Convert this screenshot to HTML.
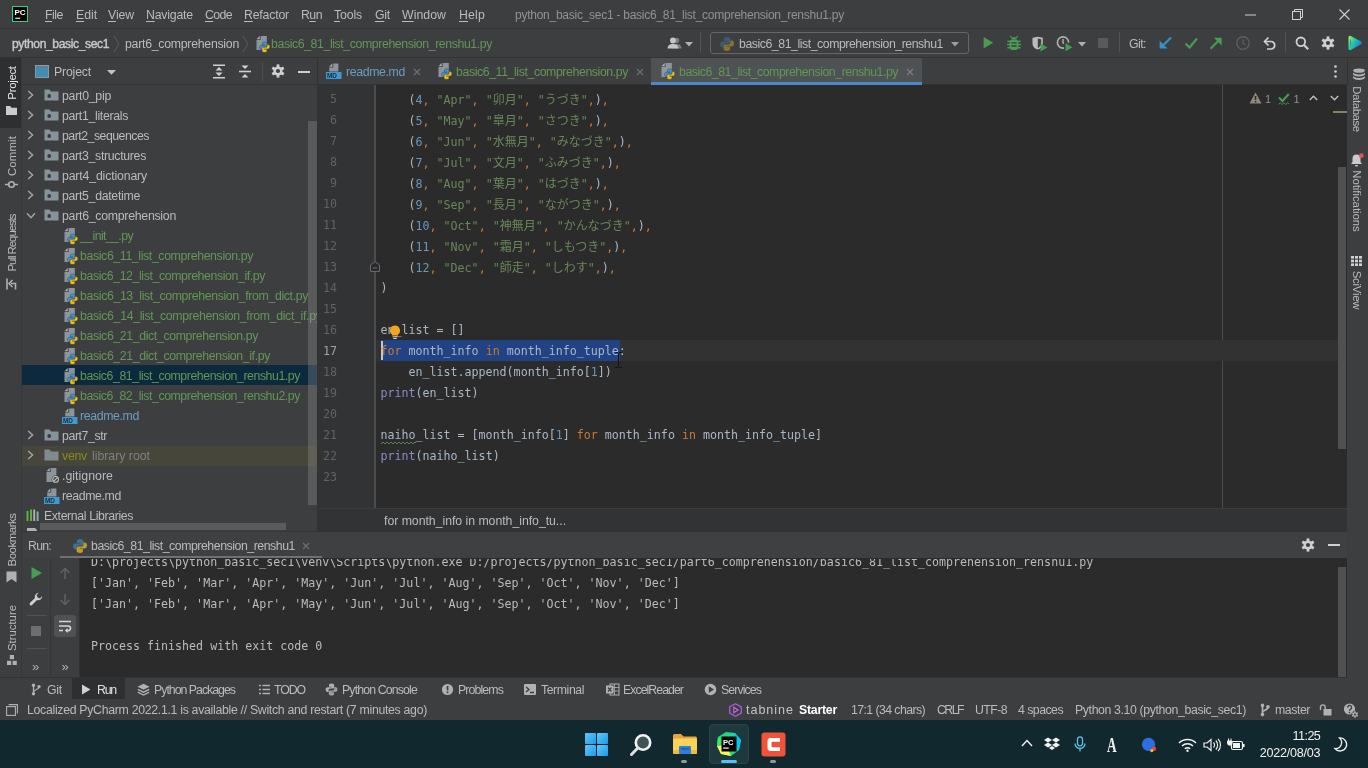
<!DOCTYPE html>
<html lang="ja"><head><meta charset="utf-8"><title>python_basic_sec1 - basic6_81_list_comprehension_renshu1.py</title>
<style>
html,body{margin:0;padding:0;background:#3c3e40;width:1368px;height:768px;overflow:hidden;}
#root{position:relative;width:1368px;height:768px;overflow:hidden;background:#3c3e40;filter:blur(0.45px);font-family:"Liberation Sans","Noto Sans CJK JP",sans-serif;font-size:12px;color:#bbb;}
#root div,#root span,#root svg{position:absolute;}
#root span.t{white-space:pre;display:block;}
#root span.t span{position:static;}
#root svg{overflow:visible;}
#root .u{font-family:"Liberation Sans","Noto Sans CJK JP",sans-serif;}
#root .m{font-family:"DejaVu Sans Mono","Liberation Mono","Noto Sans CJK JP",monospace;}
#root .j{font-family:"Noto Sans CJK JP","IPAGothic",sans-serif;font-size:12px;}
</style></head><body><div id="root">
<div style="left:0px;top:0px;width:1368px;height:720px;background:#3c3e40;"></div>
<div style="left:0px;top:28px;width:1368px;height:1px;background:#323537;"></div>
<div style="left:0px;top:57px;width:1368px;height:1px;background:#323232;"></div>
<svg style="left:12px;top:6px;" width="16" height="16" viewBox="0 0 16 16"><rect x="0.5" y="0.5" width="15" height="15" fill="#000" stroke="#21d789" stroke-width="1"/><text x="2.4" y="9.4" font-family="Liberation Sans, sans-serif" font-weight="700" font-size="8" fill="#fff">PC</text><rect x="3.2" y="11.7" width="5" height="1.1" fill="#fff"/></svg>
<span class="t u" style="left:45px;top:7.0px;height:16px;line-height:16px;font-size:12.3px;font-weight:400;color:#bbbbbb;letter-spacing:-0.457px;"><u style="text-decoration-thickness:1px;text-underline-offset:1.5px">F</u>ile</span>
<span class="t u" style="left:76px;top:7.0px;height:16px;line-height:16px;font-size:12.3px;font-weight:400;color:#bbbbbb;letter-spacing:-0.051px;"><u style="text-decoration-thickness:1px;text-underline-offset:1.5px">E</u>dit</span>
<span class="t u" style="left:108px;top:7.0px;height:16px;line-height:16px;font-size:12.3px;font-weight:400;color:#bbbbbb;letter-spacing:-0.109px;"><u style="text-decoration-thickness:1px;text-underline-offset:1.5px">V</u>iew</span>
<span class="t u" style="left:146px;top:7.0px;height:16px;line-height:16px;font-size:12.3px;font-weight:400;color:#bbbbbb;letter-spacing:-0.193px;"><u style="text-decoration-thickness:1px;text-underline-offset:1.5px">N</u>avigate</span>
<span class="t u" style="left:205px;top:7.0px;height:16px;line-height:16px;font-size:12.3px;font-weight:400;color:#bbbbbb;letter-spacing:-0.605px;"><u style="text-decoration-thickness:1px;text-underline-offset:1.5px">C</u>ode</span>
<span class="t u" style="left:244px;top:7.0px;height:16px;line-height:16px;font-size:12.3px;font-weight:400;color:#bbbbbb;letter-spacing:-0.186px;"><u style="text-decoration-thickness:1px;text-underline-offset:1.5px">R</u>efactor</span>
<span class="t u" style="left:301px;top:7.0px;height:16px;line-height:16px;font-size:12.3px;font-weight:400;color:#bbbbbb;letter-spacing:-0.526px;">R<u style="text-decoration-thickness:1px;text-underline-offset:1.5px">u</u>n</span>
<span class="t u" style="left:334px;top:7.0px;height:16px;line-height:16px;font-size:12.3px;font-weight:400;color:#bbbbbb;letter-spacing:-0.144px;"><u style="text-decoration-thickness:1px;text-underline-offset:1.5px">T</u>ools</span>
<span class="t u" style="left:375px;top:7.0px;height:16px;line-height:16px;font-size:12.3px;font-weight:400;color:#bbbbbb;letter-spacing:-0.245px;"><u style="text-decoration-thickness:1px;text-underline-offset:1.5px">G</u>it</span>
<span class="t u" style="left:402px;top:7.0px;height:16px;line-height:16px;font-size:12.3px;font-weight:400;color:#bbbbbb;letter-spacing:0.042px;"><u style="text-decoration-thickness:1px;text-underline-offset:1.5px">W</u>indow</span>
<span class="t u" style="left:459px;top:7.0px;height:16px;line-height:16px;font-size:12.3px;font-weight:400;color:#bbbbbb;letter-spacing:0.172px;"><u style="text-decoration-thickness:1px;text-underline-offset:1.5px">H</u>elp</span>
<span class="t u" style="left:515px;top:7.0px;height:16px;line-height:16px;font-size:12px;font-weight:400;color:#909395;letter-spacing:-0.258px;">python_basic_sec1 - basic6_81_list_comprehension_renshu1.py</span>
<svg style="left:1245px;top:14px;" width="12" height="2" viewBox="0 0 12 2"><rect x="0" y="0.5" width="11" height="1" fill="#d0d0d0"/></svg>
<svg style="left:1292px;top:9px;" width="12" height="12" viewBox="0 0 12 12"><rect x="0.5" y="2.5" width="8" height="8" fill="none" stroke="#d0d0d0" stroke-width="1"/><path d="M2.5 2.5V0.5H10.5V8.5H8.5" fill="none" stroke="#d0d0d0" stroke-width="1"/></svg>
<svg style="left:1339px;top:9px;" width="12" height="12" viewBox="0 0 12 12"><path d="M0.5 0.5L10.5 10.5M10.5 0.5L0.5 10.5" stroke="#d0d0d0" stroke-width="1.1" fill="none"/></svg>
<span class="t u" style="left:12px;top:36.0px;height:16px;line-height:16px;font-size:12.1px;font-weight:400;color:#c8c8c8;letter-spacing:-0.385px;-webkit-text-stroke:0.4px #c8c8c8;">python_basic_sec1</span>
<svg style="left:113px;top:35px;" width="8" height="18" viewBox="0 0 8 18"><path d="M1 1L6 9L1 17" fill="none" stroke="#5a5d5f" stroke-width="1"/></svg>
<span class="t u" style="left:125px;top:36.0px;height:16px;line-height:16px;font-size:12.3px;font-weight:400;color:#bbbbbb;letter-spacing:-0.261px;">part6_comprehension</span>
<svg style="left:242px;top:35px;" width="8" height="18" viewBox="0 0 8 18"><path d="M1 1L6 9L1 17" fill="none" stroke="#5a5d5f" stroke-width="1"/></svg>
<svg style="left:254.5px;top:36px;" width="16" height="16" viewBox="0 0 16 16"><path d="M5.6 0H11.8V14H1.5V4.1H5.6Z" fill="#9ba3ab" opacity="0.85"/><path d="M1.5 3.2L4.7 0V3.2Z" fill="#b4bbc2" opacity="0.9"/><g transform="translate(3.7 5.2) scale(0.74)"><path d="M7.9 1C5.5 1 5 2 5 3.2V5H8.2V5.6H3.4C2 5.6 1 6.8 1 8.6C1 10.4 2 11.4 3.4 11.4H4.6V9.6C4.6 8.3 5.6 7.4 6.9 7.4H9.8C10.8 7.4 11.4 6.7 11.4 5.8V3.2C11.4 1.9 10.3 1 7.9 1Z" fill="#3d96d6" stroke="#3c3e40" stroke-width="0.6"/><path d="M8.1 15C10.5 15 11 14 11 12.8V11H7.8V10.4H12.6C14 10.4 15 9.2 15 7.4C15 5.6 14 4.6 12.6 4.6H11.4V6.4C11.4 7.7 10.4 8.6 9.1 8.6H6.2C5.2 8.6 4.6 9.3 4.6 10.2V12.8C4.6 14.1 5.7 15 8.1 15Z" fill="#f2c014" stroke="#3c3e40" stroke-width="0.5"/></g></svg>
<span class="t u" style="left:271px;top:36.0px;height:16px;line-height:16px;font-size:12.3px;font-weight:400;color:#629755;letter-spacing:-0.398px;">basic6_81_list_comprehension_renshu1.py</span>
<svg style="left:666.8px;top:36px;" width="15" height="14.4" viewBox="0 0 16.5 16"><circle cx="10.5" cy="5" r="3" fill="#7d8082"/><path d="M5 14C5 10.5 7.5 9 10.5 9S16 10.5 16 14Z" fill="#7d8082"/><circle cx="6.5" cy="5" r="3.2" fill="#c4c6c7"/><path d="M0.5 14C0.5 10.5 3.3 9 6.5 9S12.5 10.5 12.5 14Z" fill="#c4c6c7"/></svg>
<svg style="left:684.5px;top:41.6px;" width="8" height="5" viewBox="0 0 8 5"><path d="M0 0H8L4 4.5Z" fill="#afb1b3"/></svg>
<div style="left:700px;top:32px;width:1px;height:20px;background:#515456;"></div>
<div style="left:710px;top:32px;width:257px;height:20px;border:1px solid #646669;border-radius:3px;background:#3c3e40;box-sizing:content-box"></div>
<svg style="left:719px;top:36px;" width="16" height="16" viewBox="0 0 16 16"><g opacity="0.45"><path d="M7.9 1C5.5 1 5 2 5 3.2V5H8.2V5.6H3.4C2 5.6 1 6.8 1 8.6C1 10.4 2 11.4 3.4 11.4H4.6V9.6C4.6 8.3 5.6 7.4 6.9 7.4H9.8C10.8 7.4 11.4 6.7 11.4 5.8V3.2C11.4 1.9 10.3 1 7.9 1Z" fill="#3e7cab"/><path d="M8.1 15C10.5 15 11 14 11 12.8V11H7.8V10.4H12.6C14 10.4 15 9.2 15 7.4C15 5.6 14 4.6 12.6 4.6H11.4V6.4C11.4 7.7 10.4 8.6 9.1 8.6H6.2C5.2 8.6 4.6 9.3 4.6 10.2V12.8C4.6 14.1 5.7 15 8.1 15Z" fill="#e0b420"/></g></svg>
<span class="t u" style="left:739px;top:36.0px;height:16px;line-height:16px;font-size:12.3px;font-weight:400;color:#bbbbbb;letter-spacing:-0.448px;">basic6_81_list_comprehension_renshu1</span>
<svg style="left:951px;top:42px;" width="8" height="5" viewBox="0 0 8 5"><path d="M0 0H8L4 4.5Z" fill="#9da0a2"/></svg>
<svg style="left:981px;top:36.2px;" width="14" height="14" viewBox="0 0 14 14"><path d="M2.6 1L12.2 6.8L2.6 12.6Z" fill="#499c54"/></svg>
<svg style="left:1006px;top:35px;" width="16" height="16" viewBox="0 0 16 16"><g fill="#499c54"><rect x="3.6" y="4.2" width="8.8" height="10.8" rx="3.6"/><path d="M5.4 4A2.7 2.7 0 0 1 10.6 4Z"/><path d="M4.6 0.6L6.6 3L5.8 3.6L3.8 1.2ZM11.4 0.6L9.4 3L10.2 3.6L12.2 1.2Z"/><rect x="1.4" y="5.6" width="3" height="1.5"/><rect x="11.6" y="5.6" width="3" height="1.5"/><rect x="1" y="8.8" width="3" height="1.5"/><rect x="12" y="8.8" width="3" height="1.5"/><rect x="1.4" y="12" width="3" height="1.5"/><rect x="11.6" y="12" width="3" height="1.5"/></g><path d="M5.4 7.8H10.6M5.4 11H10.6" stroke="#3c3e40" stroke-width="1.3"/></svg>
<svg style="left:1031px;top:36px;" width="18" height="16" viewBox="0 0 18 16"><path d="M1.5 1.8L6.8 0.8L11.8 1.8V7.4C11.8 10.6 9.6 12.6 6.7 13.6C3.7 12.6 1.5 10.6 1.5 7.4Z" fill="#b9bbbd"/><path d="M7.3 2.6V13.6C5 12.6 3.2 10.8 3.2 8V3.3Z" fill="#3c3e40" opacity="0.0"/><path d="M6.8 2.6V12C8.7 11 10.2 9.6 10.2 7.4V3.2Z" fill="#3c3e40"/><path d="M9.5 7.5L16.5 11.5L9.5 15.5Z" fill="#499c54"/></svg>
<svg style="left:1056px;top:35.3px;" width="18" height="16" viewBox="0 0 18 16"><circle cx="7" cy="7.5" r="5.6" fill="none" stroke="#afb1b3" stroke-width="1.6"/><path d="M7 4V7.8L9.6 9.2" fill="none" stroke="#afb1b3" stroke-width="1.4"/><rect x="8" y="7.7" width="10" height="9" fill="#3c3e40"/><path d="M9.5 8.2L16.5 12.2L9.5 16.2Z" fill="#499c54"/></svg>
<svg style="left:1078px;top:42px;" width="8" height="5" viewBox="0 0 8 5"><path d="M0 0H8L4 4.5Z" fill="#afb1b3"/></svg>
<div style="left:1097.5px;top:38.3px;width:10px;height:10px;background:#585a5c;"></div>
<div style="left:1119px;top:32px;width:1px;height:20px;background:#515456;"></div>
<span class="t u" style="left:1129px;top:36.0px;height:16px;line-height:16px;font-size:12.3px;font-weight:400;color:#bbbbbb;letter-spacing:-0.535px;">Git:</span>
<svg style="left:1158px;top:36px;" width="14" height="14" viewBox="0 0 14 14"><path d="M13 1.5L5.5 9" stroke="#3592c4" stroke-width="2.1" fill="none"/><path d="M1.6 4.6V12.4H9.4Z" fill="#3592c4"/></svg>
<svg style="left:1184px;top:36px;" width="14" height="14" viewBox="0 0 14 14"><path d="M1.5 7.5L5.5 11.5L13 2.5" stroke="#499c54" stroke-width="2.2" fill="none"/></svg>
<svg style="left:1209px;top:36px;" width="14" height="14" viewBox="0 0 14 14"><path d="M1.5 12.8L9 5.3" stroke="#499c54" stroke-width="2.1" fill="none"/><path d="M4.8 1.8H12.6V9.6Z" fill="#499c54"/></svg>
<svg style="left:1236px;top:36px;" width="14" height="14" viewBox="0 0 14 14"><circle cx="7" cy="7" r="6.2" fill="none" stroke="#5c5f61" stroke-width="1.4"/><path d="M7 3.5V7.3L9.6 8.8" fill="none" stroke="#5c5f61" stroke-width="1.3"/></svg>
<svg style="left:1262.5px;top:36px;" width="14" height="14" viewBox="0 0 14 14"><path d="M2 5.5H8.5A3.8 3.8 0 0 1 8.5 13H4" fill="none" stroke="#cfd0d1" stroke-width="1.7"/><path d="M5.5 1.5L1.5 5.5L5.5 9.5" fill="none" stroke="#cfd0d1" stroke-width="1.7"/></svg>
<div style="left:1285px;top:32px;width:1px;height:20px;background:#515456;"></div>
<svg style="left:1294.5px;top:36.3px;" width="14" height="14" viewBox="0 0 14 14"><circle cx="5.8" cy="5.8" r="4.3" fill="none" stroke="#cfd0d1" stroke-width="1.8"/><path d="M9 9L13.2 13.2" stroke="#cfd0d1" stroke-width="2.2"/></svg>
<svg style="left:1321px;top:36.2px;" width="14" height="14" viewBox="0 0 14 14"><g fill="#cfd0d1"><circle cx="7" cy="7" r="4.6"/><rect x="5.6" y="0.4" width="2.8" height="3.2" transform="rotate(0 7 7)"/><rect x="5.6" y="0.4" width="2.8" height="3.2" transform="rotate(60 7 7)"/><rect x="5.6" y="0.4" width="2.8" height="3.2" transform="rotate(120 7 7)"/><rect x="5.6" y="0.4" width="2.8" height="3.2" transform="rotate(180 7 7)"/><rect x="5.6" y="0.4" width="2.8" height="3.2" transform="rotate(240 7 7)"/><rect x="5.6" y="0.4" width="2.8" height="3.2" transform="rotate(300 7 7)"/></g><circle cx="7" cy="7" r="2.1" fill="#3c3e40"/></svg>
<svg style="left:1346.5px;top:35px;" width="16" height="16" viewBox="0 0 16 16"><defs><linearGradient id="cwm" x1="0" y1="0" x2="1" y2="0.6"><stop offset="0" stop-color="#c6e94c"/><stop offset="0.45" stop-color="#21d0a0"/><stop offset="1" stop-color="#1d78e8"/></linearGradient></defs><path d="M1.5 2.6Q1.5 0.2 3.8 1L13.6 6.2Q15.6 7.8 13.6 9.6L3.8 15Q1.5 15.8 1.5 13.4Z" fill="url(#cwm)"/><path d="M3 3.5L3 12.5Q5.5 8 3 3.5Z" fill="#2f6fe0" opacity="0.7"/></svg>
<div style="left:22px;top:84px;width:296px;height:1px;background:#323436;"></div>
<svg style="left:35px;top:65px;" width="14" height="13" viewBox="0 0 14 13"><rect x="0.5" y="0.5" width="13" height="12" fill="#5f7e93" stroke="#8a9aa5" stroke-width="1"/><rect x="1.5" y="3" width="11" height="8.5" fill="#3f8fb5"/></svg>
<span class="t u" style="left:54px;top:63.5px;height:16px;line-height:16px;font-size:12.3px;font-weight:400;color:#bbbbbb;letter-spacing:-0.183px;">Project</span>
<svg style="left:106.5px;top:70px;" width="9" height="5" viewBox="0 0 9 5"><path d="M0 0H9L4.5 4.8Z" fill="#c0c2c3"/></svg>
<svg style="left:212px;top:64px;" width="14" height="15" viewBox="0 0 14 15"><path d="M1 1.2H13M1 13.8H13" stroke="#cfd0d1" stroke-width="1.6"/><path d="M3.5 6.5H10.5L7 3Z M3.5 8.5H10.5L7 12Z" fill="#cfd0d1"/></svg>
<svg style="left:238px;top:64px;" width="14" height="15" viewBox="0 0 14 15"><path d="M1 7.5H13" stroke="#cfd0d1" stroke-width="1.6"/><path d="M3.5 1.5H10.5L7 5Z M3.5 13.5H10.5L7 10Z" fill="#cfd0d1"/></svg>
<div style="left:262px;top:62px;width:1px;height:20px;background:#4b4e50;"></div>
<svg style="left:271px;top:64px;" width="14" height="14" viewBox="0 0 14 14"><g fill="#cfd0d1"><circle cx="7" cy="7" r="4.6"/><rect x="5.6" y="0.4" width="2.8" height="3.2" transform="rotate(0 7 7)"/><rect x="5.6" y="0.4" width="2.8" height="3.2" transform="rotate(60 7 7)"/><rect x="5.6" y="0.4" width="2.8" height="3.2" transform="rotate(120 7 7)"/><rect x="5.6" y="0.4" width="2.8" height="3.2" transform="rotate(180 7 7)"/><rect x="5.6" y="0.4" width="2.8" height="3.2" transform="rotate(240 7 7)"/><rect x="5.6" y="0.4" width="2.8" height="3.2" transform="rotate(300 7 7)"/></g><circle cx="7" cy="7" r="2.1" fill="#3c3e40"/></svg>
<div style="left:298px;top:71px;width:12px;height:2px;background:#cfd0d1;"></div>
<div style="left:22px;top:365px;width:296px;height:20px;background:#0d293e;"></div>
<div style="left:22px;top:445.5px;width:296px;height:20px;background:#47463b;"></div>
<svg style="left:27px;top:89.5px;" width="8" height="10" viewBox="0 0 8 10"><path d="M1.2 1L5.6 5L1.2 9" fill="none" stroke="#a3a6a8" stroke-width="1.4"/></svg>
<svg style="left:43.6px;top:87.5px;" width="15" height="14" viewBox="0 0 15 14"><path d="M0.5 1.5H5.5L7 3.5H14.5V12.5H0.5Z" fill="#87939a"/><circle cx="5.2" cy="8" r="1.9" fill="#3c3e40"/></svg>
<span class="t u" style="left:62px;top:88.0px;height:16px;line-height:16px;font-size:12.3px;font-weight:400;color:#bbbbbb;letter-spacing:-0.253px;">part0_pip</span>
<svg style="left:27px;top:109.5px;" width="8" height="10" viewBox="0 0 8 10"><path d="M1.2 1L5.6 5L1.2 9" fill="none" stroke="#a3a6a8" stroke-width="1.4"/></svg>
<svg style="left:43.6px;top:107.5px;" width="15" height="14" viewBox="0 0 15 14"><path d="M0.5 1.5H5.5L7 3.5H14.5V12.5H0.5Z" fill="#87939a"/><circle cx="5.2" cy="8" r="1.9" fill="#3c3e40"/></svg>
<span class="t u" style="left:62px;top:108.0px;height:16px;line-height:16px;font-size:12.3px;font-weight:400;color:#bbbbbb;letter-spacing:-0.315px;">part1_literals</span>
<svg style="left:27px;top:129.5px;" width="8" height="10" viewBox="0 0 8 10"><path d="M1.2 1L5.6 5L1.2 9" fill="none" stroke="#a3a6a8" stroke-width="1.4"/></svg>
<svg style="left:43.6px;top:127.5px;" width="15" height="14" viewBox="0 0 15 14"><path d="M0.5 1.5H5.5L7 3.5H14.5V12.5H0.5Z" fill="#87939a"/><circle cx="5.2" cy="8" r="1.9" fill="#3c3e40"/></svg>
<span class="t u" style="left:62px;top:128.0px;height:16px;line-height:16px;font-size:12.3px;font-weight:400;color:#bbbbbb;letter-spacing:-0.491px;">part2_sequences</span>
<svg style="left:27px;top:149.5px;" width="8" height="10" viewBox="0 0 8 10"><path d="M1.2 1L5.6 5L1.2 9" fill="none" stroke="#a3a6a8" stroke-width="1.4"/></svg>
<svg style="left:43.6px;top:147.5px;" width="15" height="14" viewBox="0 0 15 14"><path d="M0.5 1.5H5.5L7 3.5H14.5V12.5H0.5Z" fill="#87939a"/><circle cx="5.2" cy="8" r="1.9" fill="#3c3e40"/></svg>
<span class="t u" style="left:62px;top:148.0px;height:16px;line-height:16px;font-size:12.3px;font-weight:400;color:#bbbbbb;letter-spacing:-0.304px;">part3_structures</span>
<svg style="left:27px;top:169.5px;" width="8" height="10" viewBox="0 0 8 10"><path d="M1.2 1L5.6 5L1.2 9" fill="none" stroke="#a3a6a8" stroke-width="1.4"/></svg>
<svg style="left:43.6px;top:167.5px;" width="15" height="14" viewBox="0 0 15 14"><path d="M0.5 1.5H5.5L7 3.5H14.5V12.5H0.5Z" fill="#87939a"/><circle cx="5.2" cy="8" r="1.9" fill="#3c3e40"/></svg>
<span class="t u" style="left:62px;top:168.0px;height:16px;line-height:16px;font-size:12.3px;font-weight:400;color:#bbbbbb;letter-spacing:-0.156px;">part4_dictionary</span>
<svg style="left:27px;top:189.5px;" width="8" height="10" viewBox="0 0 8 10"><path d="M1.2 1L5.6 5L1.2 9" fill="none" stroke="#a3a6a8" stroke-width="1.4"/></svg>
<svg style="left:43.6px;top:187.5px;" width="15" height="14" viewBox="0 0 15 14"><path d="M0.5 1.5H5.5L7 3.5H14.5V12.5H0.5Z" fill="#87939a"/><circle cx="5.2" cy="8" r="1.9" fill="#3c3e40"/></svg>
<span class="t u" style="left:62px;top:188.0px;height:16px;line-height:16px;font-size:12.3px;font-weight:400;color:#bbbbbb;letter-spacing:-0.289px;">part5_datetime</span>
<svg style="left:26px;top:211.5px;" width="10" height="8" viewBox="0 0 10 8"><path d="M1 1.2L5 5.6L9 1.2" fill="none" stroke="#a3a6a8" stroke-width="1.4"/></svg>
<svg style="left:43.6px;top:207.5px;" width="15" height="14" viewBox="0 0 15 14"><path d="M0.5 1.5H5.5L7 3.5H14.5V12.5H0.5Z" fill="#87939a"/><circle cx="5.2" cy="8" r="1.9" fill="#3c3e40"/></svg>
<span class="t u" style="left:62px;top:208.0px;height:16px;line-height:16px;font-size:12.3px;font-weight:400;color:#bbbbbb;letter-spacing:-0.261px;">part6_comprehension</span>
<svg style="left:62.5px;top:228px;" width="16" height="16" viewBox="0 0 16 16"><path d="M5.6 0H11.8V14H1.5V4.1H5.6Z" fill="#9ba3ab" opacity="0.85"/><path d="M1.5 3.2L4.7 0V3.2Z" fill="#b4bbc2" opacity="0.9"/><g transform="translate(3.7 5.2) scale(0.74)"><path d="M7.9 1C5.5 1 5 2 5 3.2V5H8.2V5.6H3.4C2 5.6 1 6.8 1 8.6C1 10.4 2 11.4 3.4 11.4H4.6V9.6C4.6 8.3 5.6 7.4 6.9 7.4H9.8C10.8 7.4 11.4 6.7 11.4 5.8V3.2C11.4 1.9 10.3 1 7.9 1Z" fill="#3d96d6" stroke="#3c3e40" stroke-width="0.6"/><path d="M8.1 15C10.5 15 11 14 11 12.8V11H7.8V10.4H12.6C14 10.4 15 9.2 15 7.4C15 5.6 14 4.6 12.6 4.6H11.4V6.4C11.4 7.7 10.4 8.6 9.1 8.6H6.2C5.2 8.6 4.6 9.3 4.6 10.2V12.8C4.6 14.1 5.7 15 8.1 15Z" fill="#f2c014" stroke="#3c3e40" stroke-width="0.5"/></g></svg>
<span class="t u" style="left:80px;top:228.0px;height:16px;line-height:16px;font-size:12.3px;font-weight:400;color:#629755;letter-spacing:-0.589px;">__init__.py</span>
<svg style="left:62.5px;top:248px;" width="16" height="16" viewBox="0 0 16 16"><path d="M5.6 0H11.8V14H1.5V4.1H5.6Z" fill="#9ba3ab" opacity="0.85"/><path d="M1.5 3.2L4.7 0V3.2Z" fill="#b4bbc2" opacity="0.9"/><g transform="translate(3.7 5.2) scale(0.74)"><path d="M7.9 1C5.5 1 5 2 5 3.2V5H8.2V5.6H3.4C2 5.6 1 6.8 1 8.6C1 10.4 2 11.4 3.4 11.4H4.6V9.6C4.6 8.3 5.6 7.4 6.9 7.4H9.8C10.8 7.4 11.4 6.7 11.4 5.8V3.2C11.4 1.9 10.3 1 7.9 1Z" fill="#3d96d6" stroke="#3c3e40" stroke-width="0.6"/><path d="M8.1 15C10.5 15 11 14 11 12.8V11H7.8V10.4H12.6C14 10.4 15 9.2 15 7.4C15 5.6 14 4.6 12.6 4.6H11.4V6.4C11.4 7.7 10.4 8.6 9.1 8.6H6.2C5.2 8.6 4.6 9.3 4.6 10.2V12.8C4.6 14.1 5.7 15 8.1 15Z" fill="#f2c014" stroke="#3c3e40" stroke-width="0.5"/></g></svg>
<span class="t u" style="left:80px;top:248.0px;height:16px;line-height:16px;font-size:12.3px;font-weight:400;color:#629755;letter-spacing:-0.366px;">basic6_11_list_comprehension.py</span>
<svg style="left:62.5px;top:268px;" width="16" height="16" viewBox="0 0 16 16"><path d="M5.6 0H11.8V14H1.5V4.1H5.6Z" fill="#9ba3ab" opacity="0.85"/><path d="M1.5 3.2L4.7 0V3.2Z" fill="#b4bbc2" opacity="0.9"/><g transform="translate(3.7 5.2) scale(0.74)"><path d="M7.9 1C5.5 1 5 2 5 3.2V5H8.2V5.6H3.4C2 5.6 1 6.8 1 8.6C1 10.4 2 11.4 3.4 11.4H4.6V9.6C4.6 8.3 5.6 7.4 6.9 7.4H9.8C10.8 7.4 11.4 6.7 11.4 5.8V3.2C11.4 1.9 10.3 1 7.9 1Z" fill="#3d96d6" stroke="#3c3e40" stroke-width="0.6"/><path d="M8.1 15C10.5 15 11 14 11 12.8V11H7.8V10.4H12.6C14 10.4 15 9.2 15 7.4C15 5.6 14 4.6 12.6 4.6H11.4V6.4C11.4 7.7 10.4 8.6 9.1 8.6H6.2C5.2 8.6 4.6 9.3 4.6 10.2V12.8C4.6 14.1 5.7 15 8.1 15Z" fill="#f2c014" stroke="#3c3e40" stroke-width="0.5"/></g></svg>
<span class="t u" style="left:80px;top:268.0px;height:16px;line-height:16px;font-size:12.3px;font-weight:400;color:#629755;letter-spacing:-0.390px;">basic6_12_list_comprehension_if.py</span>
<svg style="left:62.5px;top:288px;" width="16" height="16" viewBox="0 0 16 16"><path d="M5.6 0H11.8V14H1.5V4.1H5.6Z" fill="#9ba3ab" opacity="0.85"/><path d="M1.5 3.2L4.7 0V3.2Z" fill="#b4bbc2" opacity="0.9"/><g transform="translate(3.7 5.2) scale(0.74)"><path d="M7.9 1C5.5 1 5 2 5 3.2V5H8.2V5.6H3.4C2 5.6 1 6.8 1 8.6C1 10.4 2 11.4 3.4 11.4H4.6V9.6C4.6 8.3 5.6 7.4 6.9 7.4H9.8C10.8 7.4 11.4 6.7 11.4 5.8V3.2C11.4 1.9 10.3 1 7.9 1Z" fill="#3d96d6" stroke="#3c3e40" stroke-width="0.6"/><path d="M8.1 15C10.5 15 11 14 11 12.8V11H7.8V10.4H12.6C14 10.4 15 9.2 15 7.4C15 5.6 14 4.6 12.6 4.6H11.4V6.4C11.4 7.7 10.4 8.6 9.1 8.6H6.2C5.2 8.6 4.6 9.3 4.6 10.2V12.8C4.6 14.1 5.7 15 8.1 15Z" fill="#f2c014" stroke="#3c3e40" stroke-width="0.5"/></g></svg>
<span class="t u" style="left:80px;top:288.0px;height:16px;line-height:16px;font-size:12.3px;font-weight:400;color:#629755;letter-spacing:-0.358px;">basic6_13_list_comprehension_from_dict.py</span>
<svg style="left:62.5px;top:308px;" width="16" height="16" viewBox="0 0 16 16"><path d="M5.6 0H11.8V14H1.5V4.1H5.6Z" fill="#9ba3ab" opacity="0.85"/><path d="M1.5 3.2L4.7 0V3.2Z" fill="#b4bbc2" opacity="0.9"/><g transform="translate(3.7 5.2) scale(0.74)"><path d="M7.9 1C5.5 1 5 2 5 3.2V5H8.2V5.6H3.4C2 5.6 1 6.8 1 8.6C1 10.4 2 11.4 3.4 11.4H4.6V9.6C4.6 8.3 5.6 7.4 6.9 7.4H9.8C10.8 7.4 11.4 6.7 11.4 5.8V3.2C11.4 1.9 10.3 1 7.9 1Z" fill="#3d96d6" stroke="#3c3e40" stroke-width="0.6"/><path d="M8.1 15C10.5 15 11 14 11 12.8V11H7.8V10.4H12.6C14 10.4 15 9.2 15 7.4C15 5.6 14 4.6 12.6 4.6H11.4V6.4C11.4 7.7 10.4 8.6 9.1 8.6H6.2C5.2 8.6 4.6 9.3 4.6 10.2V12.8C4.6 14.1 5.7 15 8.1 15Z" fill="#f2c014" stroke="#3c3e40" stroke-width="0.5"/></g></svg>
<span class="t u" style="left:80px;top:308.0px;height:16px;line-height:16px;font-size:12.3px;font-weight:400;color:#629755;letter-spacing:-0.322px;clip-path:inset(0 4.5px 0 0);">basic6_14_list_comprehension_from_dict_if.py</span>
<svg style="left:62.5px;top:328px;" width="16" height="16" viewBox="0 0 16 16"><path d="M5.6 0H11.8V14H1.5V4.1H5.6Z" fill="#9ba3ab" opacity="0.85"/><path d="M1.5 3.2L4.7 0V3.2Z" fill="#b4bbc2" opacity="0.9"/><g transform="translate(3.7 5.2) scale(0.74)"><path d="M7.9 1C5.5 1 5 2 5 3.2V5H8.2V5.6H3.4C2 5.6 1 6.8 1 8.6C1 10.4 2 11.4 3.4 11.4H4.6V9.6C4.6 8.3 5.6 7.4 6.9 7.4H9.8C10.8 7.4 11.4 6.7 11.4 5.8V3.2C11.4 1.9 10.3 1 7.9 1Z" fill="#3d96d6" stroke="#3c3e40" stroke-width="0.6"/><path d="M8.1 15C10.5 15 11 14 11 12.8V11H7.8V10.4H12.6C14 10.4 15 9.2 15 7.4C15 5.6 14 4.6 12.6 4.6H11.4V6.4C11.4 7.7 10.4 8.6 9.1 8.6H6.2C5.2 8.6 4.6 9.3 4.6 10.2V12.8C4.6 14.1 5.7 15 8.1 15Z" fill="#f2c014" stroke="#3c3e40" stroke-width="0.5"/></g></svg>
<span class="t u" style="left:80px;top:328.0px;height:16px;line-height:16px;font-size:12.3px;font-weight:400;color:#629755;letter-spacing:-0.366px;">basic6_21_dict_comprehension.py</span>
<svg style="left:62.5px;top:348px;" width="16" height="16" viewBox="0 0 16 16"><path d="M5.6 0H11.8V14H1.5V4.1H5.6Z" fill="#9ba3ab" opacity="0.85"/><path d="M1.5 3.2L4.7 0V3.2Z" fill="#b4bbc2" opacity="0.9"/><g transform="translate(3.7 5.2) scale(0.74)"><path d="M7.9 1C5.5 1 5 2 5 3.2V5H8.2V5.6H3.4C2 5.6 1 6.8 1 8.6C1 10.4 2 11.4 3.4 11.4H4.6V9.6C4.6 8.3 5.6 7.4 6.9 7.4H9.8C10.8 7.4 11.4 6.7 11.4 5.8V3.2C11.4 1.9 10.3 1 7.9 1Z" fill="#3d96d6" stroke="#3c3e40" stroke-width="0.6"/><path d="M8.1 15C10.5 15 11 14 11 12.8V11H7.8V10.4H12.6C14 10.4 15 9.2 15 7.4C15 5.6 14 4.6 12.6 4.6H11.4V6.4C11.4 7.7 10.4 8.6 9.1 8.6H6.2C5.2 8.6 4.6 9.3 4.6 10.2V12.8C4.6 14.1 5.7 15 8.1 15Z" fill="#f2c014" stroke="#3c3e40" stroke-width="0.5"/></g></svg>
<span class="t u" style="left:80px;top:348.0px;height:16px;line-height:16px;font-size:12.3px;font-weight:400;color:#629755;letter-spacing:-0.364px;">basic6_21_dict_comprehension_if.py</span>
<svg style="left:62.5px;top:368px;" width="16" height="16" viewBox="0 0 16 16"><path d="M5.6 0H11.8V14H1.5V4.1H5.6Z" fill="#9ba3ab" opacity="0.85"/><path d="M1.5 3.2L4.7 0V3.2Z" fill="#b4bbc2" opacity="0.9"/><g transform="translate(3.7 5.2) scale(0.74)"><path d="M7.9 1C5.5 1 5 2 5 3.2V5H8.2V5.6H3.4C2 5.6 1 6.8 1 8.6C1 10.4 2 11.4 3.4 11.4H4.6V9.6C4.6 8.3 5.6 7.4 6.9 7.4H9.8C10.8 7.4 11.4 6.7 11.4 5.8V3.2C11.4 1.9 10.3 1 7.9 1Z" fill="#3d96d6" stroke="#3c3e40" stroke-width="0.6"/><path d="M8.1 15C10.5 15 11 14 11 12.8V11H7.8V10.4H12.6C14 10.4 15 9.2 15 7.4C15 5.6 14 4.6 12.6 4.6H11.4V6.4C11.4 7.7 10.4 8.6 9.1 8.6H6.2C5.2 8.6 4.6 9.3 4.6 10.2V12.8C4.6 14.1 5.7 15 8.1 15Z" fill="#f2c014" stroke="#3c3e40" stroke-width="0.5"/></g></svg>
<span class="t u" style="left:80px;top:368.0px;height:16px;line-height:16px;font-size:12.3px;font-weight:400;color:#629755;letter-spacing:-0.424px;">basic6_81_list_comprehension_renshu1.py</span>
<svg style="left:62.5px;top:388px;" width="16" height="16" viewBox="0 0 16 16"><path d="M5.6 0H11.8V14H1.5V4.1H5.6Z" fill="#9ba3ab" opacity="0.85"/><path d="M1.5 3.2L4.7 0V3.2Z" fill="#b4bbc2" opacity="0.9"/><g transform="translate(3.7 5.2) scale(0.74)"><path d="M7.9 1C5.5 1 5 2 5 3.2V5H8.2V5.6H3.4C2 5.6 1 6.8 1 8.6C1 10.4 2 11.4 3.4 11.4H4.6V9.6C4.6 8.3 5.6 7.4 6.9 7.4H9.8C10.8 7.4 11.4 6.7 11.4 5.8V3.2C11.4 1.9 10.3 1 7.9 1Z" fill="#3d96d6" stroke="#3c3e40" stroke-width="0.6"/><path d="M8.1 15C10.5 15 11 14 11 12.8V11H7.8V10.4H12.6C14 10.4 15 9.2 15 7.4C15 5.6 14 4.6 12.6 4.6H11.4V6.4C11.4 7.7 10.4 8.6 9.1 8.6H6.2C5.2 8.6 4.6 9.3 4.6 10.2V12.8C4.6 14.1 5.7 15 8.1 15Z" fill="#f2c014" stroke="#3c3e40" stroke-width="0.5"/></g></svg>
<span class="t u" style="left:80px;top:388.0px;height:16px;line-height:16px;font-size:12.3px;font-weight:400;color:#629755;letter-spacing:-0.424px;">basic6_82_list_comprehension_renshu2.py</span>
<svg style="left:62px;top:408px;" width="16" height="16" viewBox="0 0 16 16"><path d="M7.2 0.5H12.4V8.5H3.2V4.6H7.2Z" fill="#9ba3ab" opacity="0.85"/><path d="M3.2 3.7L6.3 0.5V3.7Z" fill="#b4bbc2" opacity="0.9"/><rect x="0" y="9" width="15.5" height="7" fill="#3e9ad0"/><text x="1" y="15" font-family="Liberation Sans, sans-serif" font-weight="700" font-size="6.4" fill="#22303a">MD</text></svg>
<span class="t u" style="left:80px;top:408.0px;height:16px;line-height:16px;font-size:12.3px;font-weight:400;color:#6d9cbe;letter-spacing:-0.356px;">readme.md</span>
<svg style="left:27px;top:429.5px;" width="8" height="10" viewBox="0 0 8 10"><path d="M1.2 1L5.6 5L1.2 9" fill="none" stroke="#a3a6a8" stroke-width="1.4"/></svg>
<svg style="left:44px;top:428px;" width="15" height="14" viewBox="0 0 15 14"><path d="M0.5 1.5H5.5L7 3.5H14.5V12.5H0.5Z" fill="#87939a"/><circle cx="5.2" cy="8" r="1.9" fill="#3c3e40"/></svg>
<span class="t u" style="left:62px;top:428.0px;height:16px;line-height:16px;font-size:12.3px;font-weight:400;color:#bbbbbb;letter-spacing:-0.392px;">part7_str</span>
<svg style="left:27px;top:449.5px;" width="8" height="10" viewBox="0 0 8 10"><path d="M1.2 1L5.6 5L1.2 9" fill="none" stroke="#a3a6a8" stroke-width="1.4"/></svg>
<svg style="left:44px;top:448px;" width="15" height="14" viewBox="0 0 15 14"><path d="M0.5 1.5H5.5L7 3.5H14.5V12.5H0.5Z" fill="#7f8b91"/></svg>
<span class="t u" style="left:62px;top:448.0px;height:16px;line-height:16px;font-size:12.3px;font-weight:400;color:#858a1e;letter-spacing:-0.246px;">venv</span>
<span class="t u" style="left:92px;top:448.0px;height:16px;line-height:16px;font-size:12.3px;font-weight:400;color:#7f8285;letter-spacing:-0.008px;">library root</span>
<svg style="left:44.5px;top:468px;" width="16" height="16" viewBox="0 0 16 16"><path d="M5.6 0H11.4V14H1.5V4.1H5.6Z" fill="#9ba3ab" opacity="0.85"/><path d="M1.5 3.2L4.7 0V3.2Z" fill="#b4bbc2" opacity="0.9"/><circle cx="10.6" cy="11.4" r="4" fill="#3c3e40"/><circle cx="10.6" cy="11.4" r="2.9" fill="none" stroke="#c3c5c6" stroke-width="1.1"/><path d="M8.6 13.4L12.6 9.4" stroke="#c3c5c6" stroke-width="1.1"/></svg>
<span class="t u" style="left:62px;top:468.0px;height:16px;line-height:16px;font-size:12.3px;font-weight:400;color:#bbbbbb;letter-spacing:0.041px;">.gitignore</span>
<svg style="left:44px;top:488px;" width="16" height="16" viewBox="0 0 16 16"><path d="M7.2 0.5H12.4V8.5H3.2V4.6H7.2Z" fill="#9ba3ab" opacity="0.85"/><path d="M3.2 3.7L6.3 0.5V3.7Z" fill="#b4bbc2" opacity="0.9"/><rect x="0" y="9" width="15.5" height="7" fill="#3e9ad0"/><text x="1" y="15" font-family="Liberation Sans, sans-serif" font-weight="700" font-size="6.4" fill="#22303a">MD</text></svg>
<span class="t u" style="left:62px;top:488.0px;height:16px;line-height:16px;font-size:12.3px;font-weight:400;color:#bbbbbb;letter-spacing:-0.356px;">readme.md</span>
<svg style="left:26px;top:509px;" width="14" height="13" viewBox="0 0 14 13"><path d="M1.5 2V12" stroke="#62b543" stroke-width="1.9"/><path d="M5 0.5V12" stroke="#62b543" stroke-width="1.9"/><path d="M8.2 0.5V12" stroke="#afb1b3" stroke-width="1.9"/><path d="M11.6 2.5V12" stroke="#8fa9b8" stroke-width="1.9"/></svg>
<span class="t u" style="left:44px;top:508.0px;height:16px;line-height:16px;font-size:12.3px;font-weight:400;color:#bbbbbb;letter-spacing:-0.372px;">External Libraries</span>
<svg style="left:26px;top:527px;" width="12" height="6" viewBox="0 0 12 6"><path d="M1 1H9L11 3V6H1Z" fill="#afb1b3"/></svg>
<div style="left:40px;top:523px;width:246px;height:7px;background:#595b5d;"></div>
<div style="left:308px;top:121px;width:9px;height:384px;background:rgba(166,166,166,0.28);"></div>
<div style="left:317px;top:58px;width:1px;height:475px;background:#323232;"></div>
<div style="left:318px;top:84px;width:1050px;height:1px;background:#323232;"></div>
<svg style="left:326px;top:63px;" width="16" height="16" viewBox="0 0 16 16"><path d="M7.2 0.5H12.4V8.5H3.2V4.6H7.2Z" fill="#9ba3ab" opacity="0.85"/><path d="M3.2 3.7L6.3 0.5V3.7Z" fill="#b4bbc2" opacity="0.9"/><rect x="0" y="9" width="15.5" height="7" fill="#3e9ad0"/><text x="1" y="15" font-family="Liberation Sans, sans-serif" font-weight="700" font-size="6.4" fill="#22303a">MD</text></svg>
<span class="t u" style="left:346px;top:63.5px;height:16px;line-height:16px;font-size:12.3px;font-weight:400;color:#6d9cbe;letter-spacing:-0.356px;">readme.md</span>
<svg style="left:413px;top:67.5px;" width="8" height="8" viewBox="0 0 8 8"><path d="M1 1L7 7M7 1L1 7" stroke="#6f7274" stroke-width="1.1" fill="none"/></svg>
<svg style="left:436.5px;top:63px;" width="16" height="16" viewBox="0 0 16 16"><path d="M5.6 0H11.8V14H1.5V4.1H5.6Z" fill="#9ba3ab" opacity="0.85"/><path d="M1.5 3.2L4.7 0V3.2Z" fill="#b4bbc2" opacity="0.9"/><g transform="translate(3.7 5.2) scale(0.74)"><path d="M7.9 1C5.5 1 5 2 5 3.2V5H8.2V5.6H3.4C2 5.6 1 6.8 1 8.6C1 10.4 2 11.4 3.4 11.4H4.6V9.6C4.6 8.3 5.6 7.4 6.9 7.4H9.8C10.8 7.4 11.4 6.7 11.4 5.8V3.2C11.4 1.9 10.3 1 7.9 1Z" fill="#3d96d6" stroke="#3c3e40" stroke-width="0.6"/><path d="M8.1 15C10.5 15 11 14 11 12.8V11H7.8V10.4H12.6C14 10.4 15 9.2 15 7.4C15 5.6 14 4.6 12.6 4.6H11.4V6.4C11.4 7.7 10.4 8.6 9.1 8.6H6.2C5.2 8.6 4.6 9.3 4.6 10.2V12.8C4.6 14.1 5.7 15 8.1 15Z" fill="#f2c014" stroke="#3c3e40" stroke-width="0.5"/></g></svg>
<span class="t u" style="left:456px;top:63.5px;height:16px;line-height:16px;font-size:12.3px;font-weight:400;color:#629755;letter-spacing:-0.398px;">basic6_11_list_comprehension.py</span>
<svg style="left:636px;top:67.5px;" width="8" height="8" viewBox="0 0 8 8"><path d="M1 1L7 7M7 1L1 7" stroke="#6f7274" stroke-width="1.1" fill="none"/></svg>
<div style="left:651px;top:58px;width:271px;height:24px;background:#4e5254;"></div>
<div style="left:651px;top:82px;width:271px;height:3px;background:#4a88c7;"></div>
<svg style="left:659.5px;top:63px;" width="16" height="16" viewBox="0 0 16 16"><path d="M5.6 0H11.8V14H1.5V4.1H5.6Z" fill="#9ba3ab" opacity="0.85"/><path d="M1.5 3.2L4.7 0V3.2Z" fill="#b4bbc2" opacity="0.9"/><g transform="translate(3.7 5.2) scale(0.74)"><path d="M7.9 1C5.5 1 5 2 5 3.2V5H8.2V5.6H3.4C2 5.6 1 6.8 1 8.6C1 10.4 2 11.4 3.4 11.4H4.6V9.6C4.6 8.3 5.6 7.4 6.9 7.4H9.8C10.8 7.4 11.4 6.7 11.4 5.8V3.2C11.4 1.9 10.3 1 7.9 1Z" fill="#3d96d6" stroke="#3c3e40" stroke-width="0.6"/><path d="M8.1 15C10.5 15 11 14 11 12.8V11H7.8V10.4H12.6C14 10.4 15 9.2 15 7.4C15 5.6 14 4.6 12.6 4.6H11.4V6.4C11.4 7.7 10.4 8.6 9.1 8.6H6.2C5.2 8.6 4.6 9.3 4.6 10.2V12.8C4.6 14.1 5.7 15 8.1 15Z" fill="#f2c014" stroke="#3c3e40" stroke-width="0.5"/></g></svg>
<span class="t u" style="left:679px;top:63.5px;height:16px;line-height:16px;font-size:12.3px;font-weight:400;color:#629755;letter-spacing:-0.450px;">basic6_81_list_comprehension_renshu1.py</span>
<svg style="left:906px;top:67.5px;" width="8" height="8" viewBox="0 0 8 8"><path d="M1 1L7 7M7 1L1 7" stroke="#7d8082" stroke-width="1.1" fill="none"/></svg>
<svg style="left:1333.5px;top:65px;" width="3" height="3" viewBox="0 0 3 3"><circle cx="1.5" cy="1.5" r="1.3" fill="#cfd0d1"/></svg>
<svg style="left:1333.5px;top:70px;" width="3" height="3" viewBox="0 0 3 3"><circle cx="1.5" cy="1.5" r="1.3" fill="#cfd0d1"/></svg>
<svg style="left:1333.5px;top:75px;" width="3" height="3" viewBox="0 0 3 3"><circle cx="1.5" cy="1.5" r="1.3" fill="#cfd0d1"/></svg>
<div style="left:318px;top:85px;width:1029px;height:423px;background:#2b2b2b;"></div>
<div style="left:318px;top:85px;width:58px;height:423px;background:#313335;"></div>
<div style="left:374px;top:85px;width:2px;height:423px;background:#4c4c4c;"></div>
<div style="left:1222px;top:85px;width:1px;height:423px;background:#4b4b4b;"></div>
<div style="left:376px;top:340px;width:963px;height:21px;background:#323232;"></div>
<div style="left:381px;top:340px;width:238.5px;height:21px;background:#214283;"></div>
<div style="left:381px;top:341px;width:2px;height:19px;background:#c8c8c8;"></div>
<span class="t m" style="left:330px;top:91.1px;height:16px;line-height:16px;font-size:11.655px;font-weight:400;color:#606366;">5</span>
<span class="t m" style="left:408.5px;top:91.1px;height:16px;line-height:16px;font-size:11.655px;font-weight:400;color:#a9b7c6;">(<span style="color:#6897bb">4</span><span style="color:#cc7832">,</span> <span style="color:#6a8759">"Apr"</span><span style="color:#cc7832">,</span> <span style="color:#6a8759">"<span class="j">卯月</span>"</span><span style="color:#cc7832">,</span> <span style="color:#6a8759">"<span class="j">うづき</span>"</span><span style="color:#cc7832">,</span>)<span style="color:#cc7832">,</span></span>
<span class="t m" style="left:330px;top:112.1px;height:16px;line-height:16px;font-size:11.655px;font-weight:400;color:#606366;">6</span>
<span class="t m" style="left:408.5px;top:112.1px;height:16px;line-height:16px;font-size:11.655px;font-weight:400;color:#a9b7c6;">(<span style="color:#6897bb">5</span><span style="color:#cc7832">,</span> <span style="color:#6a8759">"May"</span><span style="color:#cc7832">,</span> <span style="color:#6a8759">"<span class="j">皐月</span>"</span><span style="color:#cc7832">,</span> <span style="color:#6a8759">"<span class="j">さつき</span>"</span><span style="color:#cc7832">,</span>)<span style="color:#cc7832">,</span></span>
<span class="t m" style="left:330px;top:133.10000000000002px;height:16px;line-height:16px;font-size:11.655px;font-weight:400;color:#606366;">7</span>
<span class="t m" style="left:408.5px;top:133.10000000000002px;height:16px;line-height:16px;font-size:11.655px;font-weight:400;color:#a9b7c6;">(<span style="color:#6897bb">6</span><span style="color:#cc7832">,</span> <span style="color:#6a8759">"Jun"</span><span style="color:#cc7832">,</span> <span style="color:#6a8759">"<span class="j">水無月</span>"</span><span style="color:#cc7832">,</span> <span style="color:#6a8759">"<span class="j">みなづき</span>"</span><span style="color:#cc7832">,</span>)<span style="color:#cc7832">,</span></span>
<span class="t m" style="left:330px;top:154.10000000000002px;height:16px;line-height:16px;font-size:11.655px;font-weight:400;color:#606366;">8</span>
<span class="t m" style="left:408.5px;top:154.10000000000002px;height:16px;line-height:16px;font-size:11.655px;font-weight:400;color:#a9b7c6;">(<span style="color:#6897bb">7</span><span style="color:#cc7832">,</span> <span style="color:#6a8759">"Jul"</span><span style="color:#cc7832">,</span> <span style="color:#6a8759">"<span class="j">文月</span>"</span><span style="color:#cc7832">,</span> <span style="color:#6a8759">"<span class="j">ふみづき</span>"</span><span style="color:#cc7832">,</span>)<span style="color:#cc7832">,</span></span>
<span class="t m" style="left:330px;top:175.10000000000002px;height:16px;line-height:16px;font-size:11.655px;font-weight:400;color:#606366;">9</span>
<span class="t m" style="left:408.5px;top:175.10000000000002px;height:16px;line-height:16px;font-size:11.655px;font-weight:400;color:#a9b7c6;">(<span style="color:#6897bb">8</span><span style="color:#cc7832">,</span> <span style="color:#6a8759">"Aug"</span><span style="color:#cc7832">,</span> <span style="color:#6a8759">"<span class="j">葉月</span>"</span><span style="color:#cc7832">,</span> <span style="color:#6a8759">"<span class="j">はづき</span>"</span><span style="color:#cc7832">,</span>)<span style="color:#cc7832">,</span></span>
<span class="t m" style="left:323px;top:196.10000000000002px;height:16px;line-height:16px;font-size:11.655px;font-weight:400;color:#606366;">10</span>
<span class="t m" style="left:408.5px;top:196.10000000000002px;height:16px;line-height:16px;font-size:11.655px;font-weight:400;color:#a9b7c6;">(<span style="color:#6897bb">9</span><span style="color:#cc7832">,</span> <span style="color:#6a8759">"Sep"</span><span style="color:#cc7832">,</span> <span style="color:#6a8759">"<span class="j">長月</span>"</span><span style="color:#cc7832">,</span> <span style="color:#6a8759">"<span class="j">ながつき</span>"</span><span style="color:#cc7832">,</span>)<span style="color:#cc7832">,</span></span>
<span class="t m" style="left:323px;top:217.10000000000002px;height:16px;line-height:16px;font-size:11.655px;font-weight:400;color:#606366;">11</span>
<span class="t m" style="left:408.5px;top:217.10000000000002px;height:16px;line-height:16px;font-size:11.655px;font-weight:400;color:#a9b7c6;">(<span style="color:#6897bb">10</span><span style="color:#cc7832">,</span> <span style="color:#6a8759">"Oct"</span><span style="color:#cc7832">,</span> <span style="color:#6a8759">"<span class="j">神無月</span>"</span><span style="color:#cc7832">,</span> <span style="color:#6a8759">"<span class="j">かんなづき</span>"</span><span style="color:#cc7832">,</span>)<span style="color:#cc7832">,</span></span>
<span class="t m" style="left:323px;top:238.10000000000002px;height:16px;line-height:16px;font-size:11.655px;font-weight:400;color:#606366;">12</span>
<span class="t m" style="left:408.5px;top:238.10000000000002px;height:16px;line-height:16px;font-size:11.655px;font-weight:400;color:#a9b7c6;">(<span style="color:#6897bb">11</span><span style="color:#cc7832">,</span> <span style="color:#6a8759">"Nov"</span><span style="color:#cc7832">,</span> <span style="color:#6a8759">"<span class="j">霜月</span>"</span><span style="color:#cc7832">,</span> <span style="color:#6a8759">"<span class="j">しもつき</span>"</span><span style="color:#cc7832">,</span>)<span style="color:#cc7832">,</span></span>
<span class="t m" style="left:323px;top:259.1px;height:16px;line-height:16px;font-size:11.655px;font-weight:400;color:#606366;">13</span>
<span class="t m" style="left:408.5px;top:259.1px;height:16px;line-height:16px;font-size:11.655px;font-weight:400;color:#a9b7c6;">(<span style="color:#6897bb">12</span><span style="color:#cc7832">,</span> <span style="color:#6a8759">"Dec"</span><span style="color:#cc7832">,</span> <span style="color:#6a8759">"<span class="j">師走</span>"</span><span style="color:#cc7832">,</span> <span style="color:#6a8759">"<span class="j">しわす</span>"</span><span style="color:#cc7832">,</span>)<span style="color:#cc7832">,</span></span>
<span class="t m" style="left:323px;top:280.1px;height:16px;line-height:16px;font-size:11.655px;font-weight:400;color:#606366;">14</span>
<span class="t m" style="left:380.5px;top:280.1px;height:16px;line-height:16px;font-size:11.655px;font-weight:400;color:#a9b7c6;">)</span>
<span class="t m" style="left:323px;top:301.1px;height:16px;line-height:16px;font-size:11.655px;font-weight:400;color:#606366;">15</span>
<span class="t m" style="left:323px;top:322.1px;height:16px;line-height:16px;font-size:11.655px;font-weight:400;color:#606366;">16</span>
<span class="t m" style="left:380.5px;top:322.1px;height:16px;line-height:16px;font-size:11.655px;font-weight:400;color:#a9b7c6;">en_list = []</span>
<span class="t m" style="left:323px;top:343.1px;height:16px;line-height:16px;font-size:11.655px;font-weight:400;color:#a4a3a3;">17</span>
<span class="t m" style="left:380.5px;top:343.1px;height:16px;line-height:16px;font-size:11.655px;font-weight:400;color:#a9b7c6;"><span style="color:#cc7832">for</span> month_info <span style="color:#cc7832">in</span> month_info_tuple:</span>
<span class="t m" style="left:323px;top:364.1px;height:16px;line-height:16px;font-size:11.655px;font-weight:400;color:#606366;">18</span>
<span class="t m" style="left:408.5px;top:364.1px;height:16px;line-height:16px;font-size:11.655px;font-weight:400;color:#a9b7c6;">en_list.append(month_info[<span style="color:#6897bb">1</span>])</span>
<span class="t m" style="left:323px;top:385.1px;height:16px;line-height:16px;font-size:11.655px;font-weight:400;color:#606366;">19</span>
<span class="t m" style="left:380.5px;top:385.1px;height:16px;line-height:16px;font-size:11.655px;font-weight:400;color:#a9b7c6;"><span style="color:#8a8cc2">print</span>(en_list)</span>
<span class="t m" style="left:323px;top:406.1px;height:16px;line-height:16px;font-size:11.655px;font-weight:400;color:#606366;">20</span>
<span class="t m" style="left:323px;top:427.1px;height:16px;line-height:16px;font-size:11.655px;font-weight:400;color:#606366;">21</span>
<span class="t m" style="left:380.5px;top:427.1px;height:16px;line-height:16px;font-size:11.655px;font-weight:400;color:#a9b7c6;">naiho_list = [month_info[<span style="color:#6897bb">1</span>] <span style="color:#cc7832">for</span> month_info <span style="color:#cc7832">in</span> month_info_tuple]</span>
<span class="t m" style="left:323px;top:448.1px;height:16px;line-height:16px;font-size:11.655px;font-weight:400;color:#606366;">22</span>
<span class="t m" style="left:380.5px;top:448.1px;height:16px;line-height:16px;font-size:11.655px;font-weight:400;color:#a9b7c6;"><span style="color:#8a8cc2">print</span>(naiho_list)</span>
<span class="t m" style="left:323px;top:469.1px;height:16px;line-height:16px;font-size:11.655px;font-weight:400;color:#606366;">23</span>
<svg style="left:381px;top:440.5px;" width="36" height="4" viewBox="0 0 36 4"><path d="M0 3L2 1L4 3L6 1L8 3L10 1L12 3L14 1L16 3L18 1L20 3L22 1L24 3L26 1L28 3L30 1L32 3L34 1L35 2" fill="none" stroke="#5f8f5f" stroke-width="0.9"/></svg>
<svg style="left:370px;top:261px;" width="10" height="11" viewBox="0 0 10 11"><path d="M0.5 4L5 0.6L9.5 4V10.5H0.5Z" fill="#2b2b2b" stroke="#676a6d" stroke-width="1"/><path d="M2.8 7H7.2" stroke="#676a6d" stroke-width="1"/></svg>
<svg style="left:388.5px;top:324.5px;" width="12" height="14" viewBox="0 0 12 14"><path d="M6 0.5A5 5 0 0 1 9 9.5V10.5H3V9.5A5 5 0 0 1 6 0.5Z" fill="#f2a51f"/><rect x="3.5" y="11.3" width="5" height="1" fill="#c9cbcc"/><rect x="4.2" y="13" width="3.6" height="1" fill="#c9cbcc"/></svg>
<svg style="left:615px;top:352px;" width="7" height="16" viewBox="0 0 7 16"><path d="M0.5 0.5H2.5L3.5 1.5L4.5 0.5H6.5M0.5 15.5H2.5L3.5 14.5L4.5 15.5H6.5M3.5 1.5V14.5" stroke="#111" stroke-width="1" fill="none"/></svg>
<svg style="left:1249px;top:92px;" width="13" height="12" viewBox="0 0 13 12"><path d="M6.5 0.5L12.5 11.5H0.5Z" fill="#8f8a78"/><rect x="5.8" y="4" width="1.5" height="4" fill="#2b2b2b"/><rect x="5.8" y="9" width="1.5" height="1.4" fill="#2b2b2b"/></svg>
<span class="t u" style="left:1265px;top:91.0px;height:16px;line-height:16px;font-size:11px;font-weight:400;color:#8f9192;letter-spacing:-0.625px;">1</span>
<svg style="left:1278px;top:92.5px;" width="12" height="13" viewBox="0 0 12 13"><path d="M1 4.5L4.5 8L10.8 1" stroke="#499c54" stroke-width="2.1" fill="none"/><path d="M0.5 11.5L2.3 9.8L4.1 11.5L5.9 9.8L7.7 11.5L9.5 9.8L11 11" stroke="#499c54" stroke-width="0.9" fill="none"/></svg>
<span class="t u" style="left:1293.5px;top:91.0px;height:16px;line-height:16px;font-size:11px;font-weight:400;color:#8f9192;letter-spacing:-0.625px;">1</span>
<svg style="left:1309px;top:95px;" width="9" height="6" viewBox="0 0 9 6"><path d="M0.8 5L4.5 1.2L8.2 5" stroke="#c4c5c6" stroke-width="1.3" fill="none"/></svg>
<svg style="left:1330px;top:95px;" width="9" height="6" viewBox="0 0 9 6"><path d="M0.8 1L4.5 4.8L8.2 1" stroke="#c4c5c6" stroke-width="1.3" fill="none"/></svg>
<div style="left:1333px;top:111px;width:14px;height:2px;background:#86845f;"></div>
<div style="left:1338px;top:167px;width:8px;height:282px;background:#4f5051;"></div>
<div style="left:318px;top:508px;width:1029px;height:24px;background:#313335;"></div>
<div style="left:318px;top:508px;width:1029px;height:1px;background:#3a3c3e;"></div>
<span class="t u" style="left:384px;top:513.0px;height:16px;line-height:16px;font-size:12.3px;font-weight:400;color:#bbbbbb;letter-spacing:-0.035px;">for month_info in month_info_tu...</span>
<div style="left:22px;top:531px;width:296px;height:1px;background:#343638;"></div>
<div style="left:22px;top:532px;width:1325px;height:26px;background:#3e4042;"></div>
<span class="t u" style="left:28px;top:537.5px;height:16px;line-height:16px;font-size:12.3px;font-weight:400;color:#bbbbbb;letter-spacing:-0.746px;">Run:</span>
<svg style="left:72px;top:538px;" width="16" height="16" viewBox="0 0 16 16"><g opacity="0.8"><path d="M7.9 1C5.5 1 5 2 5 3.2V5H8.2V5.6H3.4C2 5.6 1 6.8 1 8.6C1 10.4 2 11.4 3.4 11.4H4.6V9.6C4.6 8.3 5.6 7.4 6.9 7.4H9.8C10.8 7.4 11.4 6.7 11.4 5.8V3.2C11.4 1.9 10.3 1 7.9 1Z" fill="#3e7cab"/><path d="M8.1 15C10.5 15 11 14 11 12.8V11H7.8V10.4H12.6C14 10.4 15 9.2 15 7.4C15 5.6 14 4.6 12.6 4.6H11.4V6.4C11.4 7.7 10.4 8.6 9.1 8.6H6.2C5.2 8.6 4.6 9.3 4.6 10.2V12.8C4.6 14.1 5.7 15 8.1 15Z" fill="#e0b420"/></g></svg>
<span class="t u" style="left:91px;top:537.5px;height:16px;line-height:16px;font-size:12.3px;font-weight:400;color:#bbbbbb;letter-spacing:-0.448px;">basic6_81_list_comprehension_renshu1</span>
<svg style="left:302px;top:542px;" width="8" height="8" viewBox="0 0 8 8"><path d="M1 1L7 7M7 1L1 7" stroke="#6e7173" stroke-width="1.1" fill="none"/></svg>
<div style="left:60px;top:556px;width:262px;height:3px;background:#6e7275;"></div>
<svg style="left:1301.3px;top:538.3px;" width="14" height="14" viewBox="0 0 14 14"><g fill="#cfd0d1"><circle cx="7" cy="7" r="4.6"/><rect x="5.6" y="0.4" width="2.8" height="3.2" transform="rotate(0 7 7)"/><rect x="5.6" y="0.4" width="2.8" height="3.2" transform="rotate(60 7 7)"/><rect x="5.6" y="0.4" width="2.8" height="3.2" transform="rotate(120 7 7)"/><rect x="5.6" y="0.4" width="2.8" height="3.2" transform="rotate(180 7 7)"/><rect x="5.6" y="0.4" width="2.8" height="3.2" transform="rotate(240 7 7)"/><rect x="5.6" y="0.4" width="2.8" height="3.2" transform="rotate(300 7 7)"/></g><circle cx="7" cy="7" r="2.1" fill="#3c3e40"/></svg>
<div style="left:1328px;top:544px;width:12px;height:2px;background:#cfd0d1;"></div>
<div style="left:80px;top:558px;width:1267px;height:120px;background:#2b2b2b;"></div>
<div style="left:22px;top:558px;width:58px;height:120px;background:#3c3e40;"></div>
<div style="left:50px;top:560px;width:1px;height:116px;background:#333537;"></div>
<div style="left:79px;top:558px;width:1px;height:120px;background:#323232;"></div>
<div style="left:27px;top:615px;width:20px;height:1px;background:#515456;"></div>
<div style="left:27px;top:648px;width:20px;height:1px;background:#515456;"></div>
<svg style="left:30px;top:566px;" width="13" height="14" viewBox="0 0 13 14"><path d="M1.5 1L12 7L1.5 13Z" fill="#499c54"/></svg>
<svg style="left:29px;top:592px;" width="14" height="14" viewBox="0 0 14 14"><path d="M9.8 0.8A4 4 0 0 0 5.9 6L0.9 11A1.5 1.5 0 0 0 3 13.1L8 8.1A4 4 0 0 0 13.2 4.2L10.9 6.5L8.6 5.4L7.5 3.1Z" fill="#cfd0d1"/></svg>
<div style="left:31px;top:626px;width:10px;height:10px;background:#6c6e70;"></div>
<span class="t u" style="left:32px;top:658.5px;height:16px;line-height:16px;font-size:13px;font-weight:400;color:#afb1b3;">»</span>
<svg style="left:59px;top:567px;" width="12" height="13" viewBox="0 0 12 13"><path d="M6 12V2M1.5 6L6 1.5L10.5 6" stroke="#5f6264" stroke-width="1.5" fill="none"/></svg>
<svg style="left:59px;top:593px;" width="12" height="13" viewBox="0 0 12 13"><path d="M6 1V11M1.5 7L6 11.5L10.5 7" stroke="#5f6264" stroke-width="1.5" fill="none"/></svg>
<div style="left:54px;top:615px;width:22px;height:22px;background:#4e5254;border-radius:3px"></div>
<svg style="left:58px;top:619px;" width="14" height="14" viewBox="0 0 14 14"><path d="M1 2.5H13M1 11.5H5" stroke="#d4d5d6" stroke-width="1.6" fill="none"/><path d="M1 7H10.2A2.3 2.3 0 0 1 10.2 11.6H8" stroke="#d4d5d6" stroke-width="1.6" fill="none"/><path d="M9.6 9L7 11.6L9.6 14Z" fill="#d4d5d6"/></svg>
<span class="t u" style="left:61.5px;top:658.5px;height:16px;line-height:16px;font-size:13px;font-weight:400;color:#afb1b3;">»</span>
<div style="left:79px;top:559px;width:1260px;height:11px;overflow:hidden;background:transparent"><span class="t m" style="left:12px;top:-4.6px;height:16px;line-height:16px;font-size:11.655px;color:#bbbbbb">D:\projects\python_basic_sec1\venv\Scripts\python.exe D:/projects/python_basic_sec1/part6_comprehension/basic6_81_list_comprehension_renshu1.py</span></div>
<span class="t m" style="left:91px;top:575.3px;height:16px;line-height:16px;font-size:11.655px;font-weight:400;color:#bbbbbb;">['Jan', 'Feb', 'Mar', 'Apr', 'May', 'Jun', 'Jul', 'Aug', 'Sep', 'Oct', 'Nov', 'Dec']</span>
<span class="t m" style="left:91px;top:596.3px;height:16px;line-height:16px;font-size:11.655px;font-weight:400;color:#bbbbbb;">['Jan', 'Feb', 'Mar', 'Apr', 'May', 'Jun', 'Jul', 'Aug', 'Sep', 'Oct', 'Nov', 'Dec']</span>
<span class="t m" style="left:91px;top:638.3px;height:16px;line-height:16px;font-size:11.655px;font-weight:400;color:#bbbbbb;">Process finished with exit code 0</span>
<div style="left:1338px;top:567px;width:8px;height:110px;background:#4f5051;"></div>
<div style="left:0px;top:677px;width:1368px;height:1px;background:#323232;"></div>
<div style="left:0px;top:678px;width:1368px;height:22px;background:#3c3e40;"></div>
<div style="left:72px;top:678px;width:53px;height:21px;background:#2d2f30;"></div>
<svg style="left:31px;top:683px;" width="10" height="13" viewBox="0 0 10 13"><circle cx="2.5" cy="2.2" r="1.7" fill="#afb1b3"/><circle cx="2.5" cy="10.8" r="1.7" fill="#afb1b3"/><circle cx="8" cy="3.6" r="1.7" fill="#afb1b3"/><path d="M2.5 2V11M8 4C8 7 2.5 6.5 2.5 9" stroke="#afb1b3" stroke-width="1.3" fill="none"/></svg>
<span class="t u" style="left:47px;top:681.5px;height:16px;line-height:16px;font-size:12.3px;font-weight:400;color:#bbbbbb;letter-spacing:-0.240px;">Git</span>
<svg style="left:81px;top:684px;" width="10" height="11" viewBox="0 0 10 11"><path d="M1 0.5L9.5 5.5L1 10.5Z" fill="#d0d1d2"/></svg>
<span class="t u" style="left:97px;top:681.5px;height:16px;line-height:16px;font-size:12.3px;font-weight:400;color:#e0e0e0;letter-spacing:-1.188px;">Run</span>
<svg style="left:137px;top:683px;" width="13" height="13" viewBox="0 0 13 13"><path d="M6.5 0.8L12.5 3.8L6.5 6.8L0.5 3.8Z" fill="#afb1b3"/><path d="M0.8 6.3L6.5 9.2L12.2 6.3M0.8 9.1L6.5 12L12.2 9.1" stroke="#afb1b3" stroke-width="1.4" fill="none"/></svg>
<span class="t u" style="left:154px;top:681.5px;height:16px;line-height:16px;font-size:12.3px;font-weight:400;color:#bbbbbb;letter-spacing:-0.981px;">Python Packages</span>
<svg style="left:259px;top:684px;" width="11" height="11" viewBox="0 0 11 11"><path d="M0 1.5H2M3.5 1.5H11M0 5.5H2M3.5 5.5H11M0 9.5H2M3.5 9.5H11" stroke="#afb1b3" stroke-width="1.7"/></svg>
<span class="t u" style="left:274px;top:681.5px;height:16px;line-height:16px;font-size:12.3px;font-weight:400;color:#bbbbbb;letter-spacing:-1.078px;">TODO</span>
<svg style="left:325px;top:683px;" width="13" height="13" viewBox="0 0 13 13"><path d="M6.4 0.5C4.5 0.5 4 1.3 4 2.3V3.8H6.7V4.3H2.6C1.4 4.3 0.6 5.2 0.6 6.6C0.6 8 1.4 8.9 2.6 8.9H3.6V7.4C3.6 6.4 4.4 5.6 5.4 5.6H7.8C8.6 5.6 9.2 5 9.2 4.3V2.3C9.2 1.3 8.3 0.5 6.4 0.5Z" fill="#afb1b3"/><path d="M6.6 12.5C8.5 12.5 9 11.7 9 10.7V9.2H6.3V8.7H10.4C11.6 8.7 12.4 7.8 12.4 6.4C12.4 5 11.6 4.1 10.4 4.1H9.4V5.6C9.4 6.6 8.6 7.4 7.6 7.4H5.2C4.4 7.4 3.8 8 3.8 8.7V10.7C3.8 11.7 4.7 12.5 6.6 12.5Z" fill="#afb1b3" opacity="0.85"/></svg>
<span class="t u" style="left:342px;top:681.5px;height:16px;line-height:16px;font-size:12.3px;font-weight:400;color:#bbbbbb;letter-spacing:-0.845px;">Python Console</span>
<svg style="left:441px;top:683px;" width="13" height="13" viewBox="0 0 13 13"><circle cx="6.5" cy="6.5" r="5.6" fill="#afb1b3"/><rect x="5.7" y="3" width="1.7" height="4.4" fill="#3c3e40"/><rect x="5.7" y="8.5" width="1.7" height="1.7" fill="#3c3e40"/></svg>
<span class="t u" style="left:458px;top:681.5px;height:16px;line-height:16px;font-size:12.3px;font-weight:400;color:#bbbbbb;letter-spacing:-0.869px;">Problems</span>
<svg style="left:524px;top:684px;" width="12" height="11" viewBox="0 0 12 11"><rect x="0" y="0" width="12" height="11" rx="1" fill="#afb1b3"/><path d="M2 3L5 5.5L2 8M6 8.5H10" stroke="#3c3e40" stroke-width="1.3" fill="none"/></svg>
<span class="t u" style="left:541px;top:681.5px;height:16px;line-height:16px;font-size:12.3px;font-weight:400;color:#bbbbbb;letter-spacing:-0.434px;">Terminal</span>
<svg style="left:606px;top:683px;" width="13" height="13" viewBox="0 0 13 13"><rect x="4" y="1" width="9" height="11" fill="none" stroke="#afb1b3" stroke-width="1"/><path d="M4 4.5H13M4 8H13M8.5 1V12" stroke="#afb1b3" stroke-width="0.8"/><rect x="0" y="2.5" width="7.5" height="8" fill="#afb1b3"/><path d="M2 4.5L5.5 8.5M5.5 4.5L2 8.5" stroke="#3c3e40" stroke-width="1.2"/></svg>
<span class="t u" style="left:623px;top:681.5px;height:16px;line-height:16px;font-size:12.3px;font-weight:400;color:#bbbbbb;letter-spacing:-0.946px;">ExcelReader</span>
<svg style="left:704px;top:683px;" width="13" height="13" viewBox="0 0 13 13"><circle cx="6.5" cy="6.5" r="5.8" fill="#afb1b3"/><path d="M4.8 3.3L10 6.5L4.8 9.7Z" fill="#3c3e40"/></svg>
<span class="t u" style="left:721px;top:681.5px;height:16px;line-height:16px;font-size:12.3px;font-weight:400;color:#bbbbbb;letter-spacing:-0.895px;">Services</span>
<div style="left:0px;top:700px;width:1368px;height:20px;background:#3c3e40;"></div>
<svg style="left:6px;top:704px;" width="12" height="12" viewBox="0 0 12 12"><rect x="0.6" y="2.6" width="8.8" height="8.8" fill="none" stroke="#afb1b3" stroke-width="1.1"/><path d="M2.6 0.6H11.4V9.4" stroke="#afb1b3" stroke-width="1.1" fill="none"/></svg>
<span class="t u" style="left:27px;top:702.0px;height:16px;line-height:16px;font-size:12.3px;font-weight:400;color:#bbbbbb;letter-spacing:-0.300px;">Localized PyCharm 2022.1.1 is available // Switch and restart (7 minutes ago)</span>
<svg style="left:729px;top:703px;" width="13" height="14" viewBox="0 0 13 14"><path d="M6.5 0.7L12.3 4V10L6.5 13.3L0.7 10V4Z" fill="none" stroke="#a45ee0" stroke-width="1.3"/><path d="M4.8 4.2L9.2 7L4.8 9.8Z" fill="none" stroke="#d36ad6" stroke-width="1.1"/></svg>
<span class="t u" style="left:746px;top:702.0px;height:16px;line-height:16px;font-size:12.6px;font-weight:400;color:#c4c4c4;letter-spacing:0.953px;">tabnine</span>
<span class="t u" style="left:799px;top:702.0px;height:16px;line-height:16px;font-size:12.3px;font-weight:700;color:#ffffff;letter-spacing:-0.237px;">Starter</span>
<span class="t u" style="left:851px;top:702.0px;height:16px;line-height:16px;font-size:12.3px;font-weight:400;color:#bbbbbb;letter-spacing:-0.581px;">17:1 (34 chars)</span>
<span class="t u" style="left:937px;top:702.0px;height:16px;line-height:16px;font-size:12.3px;font-weight:400;color:#bbbbbb;letter-spacing:-1.531px;">CRLF</span>
<span class="t u" style="left:975px;top:702.0px;height:16px;line-height:16px;font-size:12.3px;font-weight:400;color:#bbbbbb;letter-spacing:-0.569px;">UTF-8</span>
<span class="t u" style="left:1018px;top:702.0px;height:16px;line-height:16px;font-size:12.3px;font-weight:400;color:#bbbbbb;letter-spacing:-0.527px;">4 spaces</span>
<span class="t u" style="left:1075px;top:702.0px;height:16px;line-height:16px;font-size:12.3px;font-weight:400;color:#bbbbbb;letter-spacing:-0.372px;">Python 3.10 (python_basic_sec1)</span>
<svg style="left:1260px;top:703px;" width="10" height="14" viewBox="0 0 10 14"><circle cx="2.5" cy="2.4" r="1.8" fill="#afb1b3"/><circle cx="2.5" cy="11.6" r="1.8" fill="#afb1b3"/><circle cx="8" cy="3.8" r="1.8" fill="#afb1b3"/><path d="M2.5 2V12M8 4C8 7.5 2.5 7 2.5 9.5" stroke="#afb1b3" stroke-width="1.7" fill="none"/></svg>
<span class="t u" style="left:1275px;top:702.0px;height:16px;line-height:16px;font-size:12.3px;font-weight:400;color:#bbbbbb;letter-spacing:-0.432px;">master</span>
<svg style="left:1319px;top:703.3px;" width="13" height="13" viewBox="0 0 13 13"><rect x="4.5" y="6" width="8" height="6.5" fill="#afb1b3"/><path d="M1.5 7V4.2A2.3 2.3 0 0 1 6.2 4.2V6" stroke="#afb1b3" stroke-width="1.4" fill="none"/></svg>
<svg style="left:1342.5px;top:702.6px;" width="16" height="15" viewBox="0 0 16 15"><circle cx="6.5" cy="6" r="5.6" fill="#afb1b3"/><path d="M4.6 4.6A2 2 0 1 1 7.4 6.3C6.7 6.7 6.5 7 6.5 7.8" stroke="#3c3e40" stroke-width="1.3" fill="none"/><rect x="5.8" y="8.8" width="1.4" height="1.4" fill="#3c3e40"/><circle cx="12" cy="11.5" r="3.6" fill="#3c3e40"/><g transform="translate(8.5 8) scale(0.5)"><g fill="#afb1b3"><circle cx="7" cy="7" r="4.6"/><rect x="5.6" y="0.4" width="2.8" height="3.2" transform="rotate(0 7 7)"/><rect x="5.6" y="0.4" width="2.8" height="3.2" transform="rotate(60 7 7)"/><rect x="5.6" y="0.4" width="2.8" height="3.2" transform="rotate(120 7 7)"/><rect x="5.6" y="0.4" width="2.8" height="3.2" transform="rotate(180 7 7)"/><rect x="5.6" y="0.4" width="2.8" height="3.2" transform="rotate(240 7 7)"/><rect x="5.6" y="0.4" width="2.8" height="3.2" transform="rotate(300 7 7)"/></g><circle cx="7" cy="7" r="2.1" fill="#3c3e40"/></g></svg>
<div style="left:0px;top:720px;width:1368px;height:48px;background:#11292e;"></div>
<div style="left:585px;top:733px;width:11px;height:11px;background:linear-gradient(135deg,#5fc8f7,#1d9bea);border-radius:1px"></div>
<div style="left:597px;top:733px;width:11px;height:11px;background:linear-gradient(135deg,#5fc8f7,#1d9bea);border-radius:1px"></div>
<div style="left:585px;top:745px;width:11px;height:11px;background:linear-gradient(135deg,#5fc8f7,#1d9bea);border-radius:1px"></div>
<div style="left:597px;top:745px;width:11px;height:11px;background:linear-gradient(135deg,#5fc8f7,#1d9bea);border-radius:1px"></div>
<svg style="left:629px;top:733px;" width="24" height="24" viewBox="0 0 24 24"><circle cx="14" cy="9.5" r="7.2" fill="rgba(255,255,255,0.2)" stroke="#f2f2f2" stroke-width="2.6"/><path d="M8.8 15L2.5 21.5" stroke="#e0e0e0" stroke-width="3" stroke-linecap="round"/></svg>
<svg style="left:672px;top:732px;" width="26" height="24" viewBox="0 0 26 24"><path d="M1 3.5A1.5 1.5 0 0 1 2.5 2H9L11.5 4.5H23.5A1.5 1.5 0 0 1 25 6V9H1Z" fill="#e8a33d"/><rect x="1" y="6.5" width="24" height="15.5" rx="1.5" fill="#fbd35a"/><path d="M1 18H25V20.5A1.5 1.5 0 0 1 23.5 22H2.5A1.5 1.5 0 0 1 1 20.5Z" fill="#f2b93c"/><rect x="7" y="14" width="12" height="8" rx="1" fill="#2f7fd6"/><rect x="9" y="16" width="8" height="1.6" fill="#1d5fae"/></svg>
<div style="left:681px;top:760px;width:6px;height:3px;border-radius:2px;background:#8e9a9c"></div>
<div style="left:709px;top:724px;width:40px;height:40px;border-radius:4px;background:#1f383d;border:1px solid #2b4449;box-sizing:border-box"></div>
<svg style="left:716px;top:731px;" width="26" height="26" viewBox="0 0 26 26"><path d="M2 6L10 1L19 2L25 9L23 19L15 25L5 23L1 15Z" fill="#21d789"/><path d="M1 15L5 23L15 25L10 14Z" fill="#fcf84a"/><path d="M19 2L25 9L23 19L17 10Z" fill="#07c3f2"/><path d="M2 6L1 15L7 10Z" fill="#3bea62"/><rect x="5.5" y="5.5" width="15" height="15" fill="#000"/><text x="7" y="13.8" font-family="Liberation Sans, sans-serif" font-weight="700" font-size="7.6" fill="#fff">PC</text><rect x="7.2" y="16.5" width="5.5" height="1.2" fill="#fff"/></svg>
<div style="left:721px;top:760px;width:16px;height:3px;border-radius:2px;background:#4cc2ff"></div>
<svg style="left:761px;top:732px;" width="25" height="25" viewBox="0 0 25 25"><rect x="0.5" y="0.5" width="24" height="24" rx="3" fill="#f0523a"/><path d="M19 6H9.5A3 3 0 0 0 6.5 9V16A3 3 0 0 0 9.5 19H19V15.2H11.5A1 1 0 0 1 10.5 14.2V10.8A1 1 0 0 1 11.5 9.8H19Z" fill="#fff"/></svg>
<div style="left:770px;top:760px;width:6px;height:3px;border-radius:2px;background:#8e9a9c"></div>
<svg style="left:1021px;top:739px;" width="12" height="8" viewBox="0 0 12 8"><path d="M1 7L6 1.5L11 7" stroke="#f2f2f2" stroke-width="1.4" fill="none"/></svg>
<svg style="left:1044px;top:737px;" width="16" height="14" viewBox="0 0 16 14"><g fill="#f2f2f2"><path d="M4 0.5L8 3L4 5.5L0 3Z"/><path d="M12 0.5L16 3L12 5.5L8 3Z"/><path d="M4 5.5L8 8L4 10.5L0 8Z"/><path d="M12 5.5L16 8L12 10.5L8 8Z"/><path d="M8 9L11 11L8 13L5 11Z"/></g></svg>
<svg style="left:1074px;top:736px;" width="12" height="16" viewBox="0 0 12 16"><rect x="3.5" y="0.8" width="5" height="9" rx="2.5" fill="none" stroke="#5ec3e6" stroke-width="1.3"/><path d="M1 7.5A5 5 0 0 0 11 7.5M6 12.5V15.5" stroke="#5ec3e6" stroke-width="1.3" fill="none"/></svg>
<span class="t u" style="left:1107.3px;top:732.6px;height:24px;line-height:24px;font-size:21.5px;font-weight:700;color:#f2f2f2;font-family:'Liberation Serif',serif;transform:scaleX(0.62);transform-origin:left center;">A</span>
<svg style="left:1140px;top:736px;" width="18" height="18" viewBox="0 0 18 18"><circle cx="8.5" cy="8.3" r="6.6" fill="#2d6fe0"/><circle cx="14" cy="12.8" r="2.2" fill="#e8443a"/><circle cx="11.8" cy="14.6" r="1.6" fill="#f5c02c"/></svg>
<svg style="left:1178px;top:738px;" width="19" height="14" viewBox="0 0 19 14"><path d="M1 5A12 12 0 0 1 18 5M4 8A8 8 0 0 1 15 8M6.8 10.8A4.2 4.2 0 0 1 12.2 10.8" stroke="#f2f2f2" stroke-width="1.5" fill="none"/><circle cx="9.5" cy="12.8" r="1.2" fill="#f2f2f2"/></svg>
<svg style="left:1203px;top:738px;" width="18" height="14" viewBox="0 0 18 14"><path d="M1 5H4L8 1.5V12.5L4 9H1Z" fill="none" stroke="#f2f2f2" stroke-width="1.2"/><path d="M10.5 4.5A3.5 3.5 0 0 1 10.5 9.5M12.8 2.5A6.5 6.5 0 0 1 12.8 11.5M15 0.8A9 9 0 0 1 15 13.2" stroke="#f2f2f2" stroke-width="1.1" fill="none"/></svg>
<svg style="left:1227px;top:738px;" width="18" height="14" viewBox="0 0 18 14"><rect x="4.5" y="3.5" width="11" height="8" rx="1.5" fill="none" stroke="#f2f2f2" stroke-width="1.2"/><rect x="6" y="5" width="7" height="5" fill="#f2f2f2"/><rect x="16" y="6" width="1.6" height="3" fill="#f2f2f2"/><path d="M1.5 0.5V3M4 0.5V3M0.5 3H5V5A2 2 0 0 1 0.5 5Z" stroke="#f2f2f2" stroke-width="1" fill="#f2f2f2"/></svg>
<span class="t u" style="left:1292.5px;top:728.3px;height:16px;line-height:16px;font-size:12.6px;font-weight:400;color:#f2f2f2;letter-spacing:-0.559px;">11:25</span>
<span class="t u" style="left:1259.8px;top:744.5px;height:16px;line-height:16px;font-size:12.6px;font-weight:400;color:#f2f2f2;letter-spacing:-0.253px;">2022/08/03</span>
<svg style="left:1334px;top:737px;" width="14" height="15" viewBox="0 0 14 15"><path d="M5.5 1A6.5 6.5 0 1 1 1 11.5A6 6 0 0 0 5.5 1Z" fill="none" stroke="#f2f2f2" stroke-width="1.3"/></svg>
<div style="left:0px;top:58px;width:22px;height:619px;background:#3c3e40;"></div>
<div style="left:0px;top:58px;width:21px;height:70px;background:#2d2f30;"></div>
<div style="left:21px;top:58px;width:1px;height:619px;background:#353739;"></div>
<span class="t u" style="left:-4.649999999999999px;top:74.65px;height:16px;line-height:16px;font-size:11.4px;font-weight:400;color:#e8e8e8;letter-spacing:-0.308px;width:33.3px;transform:rotate(-90deg);transform-origin:center center;">Project</span>
<svg style="left:6px;top:105.5px;" width="11" height="9" viewBox="0 0 11 9"><path d="M0 0H4.2L5.6 1.8H11V9H0Z" fill="#c9cbcc"/></svg>
<span class="t u" style="left:-8.5px;top:148.0px;height:16px;line-height:16px;font-size:11.4px;font-weight:400;color:#bbbbbb;letter-spacing:0.128px;width:40px;transform:rotate(-90deg);transform-origin:center center;">Commit</span>
<svg style="left:5px;top:178px;" width="13" height="13" viewBox="0 0 13 13"><circle cx="6.5" cy="6.5" r="2.8" fill="none" stroke="#afb1b3" stroke-width="1.6"/><path d="M0 6.5H3.5M9.5 6.5H13" stroke="#afb1b3" stroke-width="1.6"/></svg>
<span class="t u" style="left:-17.0px;top:234.5px;height:16px;line-height:16px;font-size:11.4px;font-weight:400;color:#bbbbbb;letter-spacing:-1.022px;width:57px;transform:rotate(-90deg);transform-origin:center center;">Pull Requests</span>
<svg style="left:5px;top:277.5px;" width="13" height="12" viewBox="0 0 13 12"><path d="M2 0.5V11.5" stroke="#afb1b3" stroke-width="1.6"/><path d="M6 5.5H10.5V11.5" stroke="#afb1b3" stroke-width="1.6" fill="none"/><path d="M7.5 2L4 5.5L7.5 9" stroke="#afb1b3" stroke-width="1.6" fill="none"/></svg>
<span class="t u" style="left:-15.0px;top:531.5px;height:16px;line-height:16px;font-size:11.4px;font-weight:400;color:#bbbbbb;letter-spacing:-0.443px;width:53px;transform:rotate(-90deg);transform-origin:center center;">Bookmarks</span>
<svg style="left:6px;top:571px;" width="11" height="12" viewBox="0 0 11 12"><path d="M0.5 0.5H10.5V11.5L5.5 8L0.5 11.5Z" fill="#afb1b3"/></svg>
<span class="t u" style="left:-11.5px;top:620.0px;height:16px;line-height:16px;font-size:11.4px;font-weight:400;color:#bbbbbb;letter-spacing:-0.024px;width:46px;transform:rotate(-90deg);transform-origin:center center;">Structure</span>
<svg style="left:6.5px;top:654.5px;" width="10" height="10" viewBox="0 0 10 10"><rect x="0" y="5.8" width="4.2" height="4.2" fill="#afb1b3"/><rect x="5.6" y="5.8" width="4.2" height="4.2" fill="#afb1b3"/><rect x="2.8" y="0" width="4.2" height="4.2" fill="#afb1b3"/></svg>
<div style="left:1347px;top:58px;width:21px;height:620px;background:#3c3e40;"></div>
<div style="left:1347px;top:58px;width:1px;height:27px;background:#323232;"></div>
<svg style="left:1351.5px;top:68px;" width="14" height="13" viewBox="0 0 14 13"><ellipse cx="7" cy="2.6" rx="6" ry="2.2" fill="#afb1b3"/><path d="M1 4.2V6.2A6 2.2 0 0 0 13 6.2V4.2A6 2.2 0 0 1 1 4.2ZM1 7.7V9.7A6 2.2 0 0 0 13 9.7V7.7A6 2.2 0 0 1 1 7.7Z" fill="#afb1b3"/></svg>
<span class="t u" style="left:1334.25px;top:100.75px;height:16px;line-height:16px;font-size:11.4px;font-weight:400;color:#bbbbbb;letter-spacing:-0.408px;width:45.5px;transform:rotate(90deg);transform-origin:center center;">Database</span>
<svg style="left:1350px;top:153px;" width="14" height="14" viewBox="0 0 14 14"><path d="M6.5 1.5A4 4 0 0 0 2.5 5.5V9L1 11H12L10.5 9V5.5A4 4 0 0 0 6.5 1.5ZM5 12H8A1.5 1.5 0 0 1 5 12Z" fill="#c9cbcc"/><circle cx="11.3" cy="2.7" r="2.4" fill="#e05555"/></svg>
<span class="t u" style="left:1326.25px;top:193.25px;height:16px;line-height:16px;font-size:11.4px;font-weight:400;color:#bbbbbb;letter-spacing:-0.042px;width:61.5px;transform:rotate(90deg);transform-origin:center center;">Notifications</span>
<svg style="left:1351px;top:256px;" width="13" height="11" viewBox="0 0 13 11"><g fill="#d0d1d2"><rect x="0" y="0" width="3" height="2.6"/><rect x="4" y="0" width="3" height="2.6"/><rect x="8" y="0" width="3" height="2.6"/><rect x="0" y="3.7" width="3" height="2.6"/><rect x="4" y="3.7" width="3" height="2.6"/><rect x="8" y="3.7" width="3" height="2.6"/><rect x="0" y="7.4" width="3" height="2.6"/><rect x="4" y="7.4" width="3" height="2.6"/><rect x="8" y="7.4" width="3" height="2.6"/></g></svg>
<span class="t u" style="left:1337.65px;top:281.85px;height:16px;line-height:16px;font-size:11.4px;font-weight:400;color:#bbbbbb;letter-spacing:-0.230px;width:38.69999999999999px;transform:rotate(90deg);transform-origin:center center;">SciView</span>
</div></body></html>
